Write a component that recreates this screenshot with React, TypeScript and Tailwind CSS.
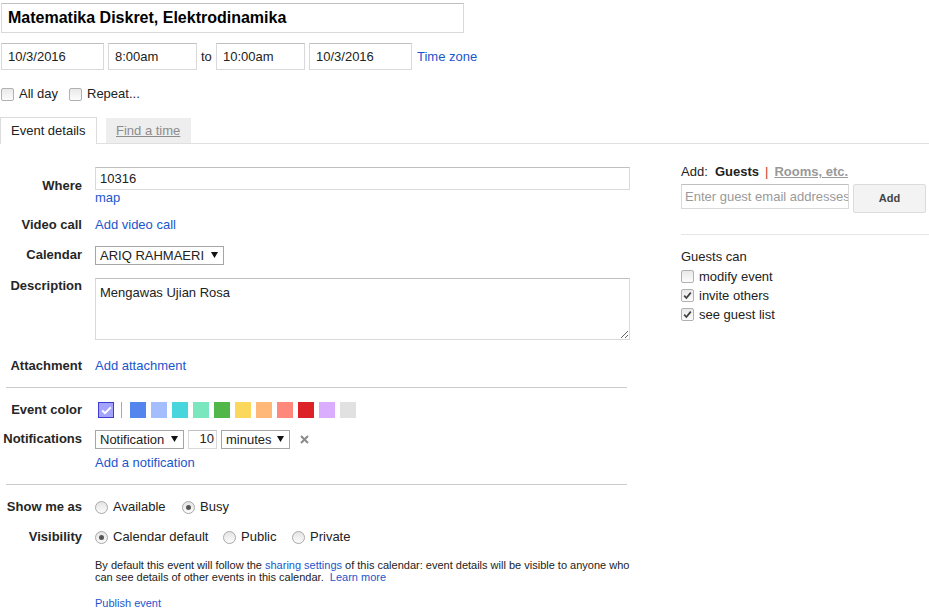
import React from "react";

const LINK = "text-[#1a56cc]";

function Check({ checked }: { checked?: boolean }) {
  return (
    <span className="inline-flex w-[13px] h-[13px] shrink-0 items-center justify-center rounded-[2px] border border-[#b1b1b1] bg-linear-to-b from-[#e9e9e9] to-[#fcfcfc]">
      {checked && (
        <svg width="9" height="9" viewBox="0 0 9 9">
          <path d="M1.2 4.6 L3.4 7 L7.8 1.6" stroke="#404040" strokeWidth="1.7" fill="none" />
        </svg>
      )}
    </span>
  );
}

function Radio({ checked }: { checked?: boolean }) {
  return (
    <span className="inline-flex w-[13px] h-[13px] shrink-0 items-center justify-center rounded-full border border-[#a8a8a8] bg-linear-to-b from-[#e4e4e4] to-[#fbfbfb]">
      {checked && <span className="w-[5px] h-[5px] rounded-full bg-[#555]" />}
    </span>
  );
}

function Arrow() {
  return (
    <svg width="7" height="6" viewBox="0 0 7 6" className="shrink-0">
      <path d="M0 0 H7 L3.5 6 Z" fill="#111" />
    </svg>
  );
}

function Select({ label, w }: { label: string; w: string }) {
  return (
    <div className={`${w} h-[19px] border border-[#a6a6a6] flex items-center justify-between pl-[4px] pr-[5px] bg-white`}>
      <span className="leading-none">{label}</span>
      <Arrow />
    </div>
  );
}

function Row({
  label,
  children,
  className = "",
  labelClass = "",
}: {
  label?: string;
  children?: React.ReactNode;
  className?: string;
  labelClass?: string;
}) {
  return (
    <div className={`flex ${className}`}>
      <div className={`w-[82px] shrink-0 text-right font-bold text-[#262626] leading-[16px] ${labelClass}`}>{label}</div>
      <div className="ml-[13px] flex-1 min-w-0">{children}</div>
    </div>
  );
}

const swatches = [
  "#5484ed",
  "#a4bdfc",
  "#46d6db",
  "#7ae7bf",
  "#51b749",
  "#fbd75b",
  "#ffb878",
  "#ff887c",
  "#dc2127",
  "#dbadff",
  "#e1e1e1",
];

const box = "border border-[#d9d9d9] border-t-[#c0c0c0] bg-white";

export default function App() {
  return (
    <div className="w-[929px] h-[616px] overflow-hidden bg-white text-[13px] text-[#222] font-['Liberation_Sans',Arial,sans-serif]">
      <div className="pt-[3px] pl-[1px]">
        <div className={`w-[463px] h-[30px] ${box} flex items-center pl-[6px] text-[16px] font-bold text-black`}>
          Matematika Diskret, Elektrodinamika
        </div>
        <div className="mt-[10px] flex items-center h-[27px]">
          <div className={`w-[103px] h-[27px] ${box} flex items-center pl-[6px]`}>10/3/2016</div>
          <div className={`ml-[4px] w-[89px] h-[27px] ${box} flex items-center pl-[6px]`}>8:00am</div>
          <span className="w-[19px] pl-[4px]">to</span>
          <div className={`w-[89px] h-[27px] ${box} flex items-center pl-[6px]`}>10:00am</div>
          <div className={`ml-[4px] w-[103px] h-[27px] ${box} flex items-center pl-[6px]`}>10/3/2016</div>
          <span className={`ml-[5px] ${LINK}`}>Time zone</span>
        </div>
        <div className="mt-[16px] flex items-center h-[16px]">
          <div className="w-[68px] flex items-center gap-[5px]">
            <Check />
            <span>All day</span>
          </div>
          <div className="flex items-center gap-[5px]">
            <Check />
            <span>Repeat...</span>
          </div>
        </div>
      </div>

      <div className="mt-[15px] flex h-[27px]">
        <div className="w-[97px] border border-b-0 border-[#dcdcdc] bg-white pl-[10px] flex items-center">Event details</div>
        <div className="w-[9px] border-b border-[#e0e0e0]" />
        <div className="w-[85px] mt-[1px] bg-[#eeeeee] border-b border-[#e0e0e0] pl-[10px] flex items-center text-[#8c8c8c] underline">
          Find a time
        </div>
        <div className="flex-1 border-b border-[#e0e0e0]" />
      </div>

      <div className="flex">
        <div className="w-[630px] pt-[23px]">
          <Row label="Where" labelClass="pt-[11px]">
            <div className={`w-[535px] h-[23px] ${box} flex items-center pl-[4px]`}>10316</div>
            <div className={`leading-[16px] ${LINK}`}>map</div>
          </Row>
          <Row label="Video call" className="mt-[4px] h-[30px] items-center">
            <span className={LINK}>Add video call</span>
          </Row>
          <Row label="Calendar" className="h-[30px] items-center">
            <Select label="ARIQ RAHMAERI" w="w-[129px]" />
          </Row>
          <Row label="Description" className="mt-[8px]" labelClass="pt-[0px]">
            <textarea
              readOnly
              defaultValue="Mengawas Ujian Rosa"
              className="block w-[535px] h-[62px] border border-[#d9d9d9] border-t-[#c0c0c0] pl-[4px] pt-[4px] text-[13px] outline-none"
            />
          </Row>
          <Row label="Attachment" className="mt-[11px] h-[30px] items-center">
            <span className={LINK}>Add attachment</span>
          </Row>
          <div className="mt-[6px] ml-[6px] w-[621px] border-t border-[#cccccc]" />
          <Row label="Event color" className="mt-[10px] h-[24px] items-center">
            <div className="flex items-center">
              <span className="ml-[3px] w-[16px] h-[16px] bg-[#a4a4ff] border-[1.5px] border-[#3c3cd0] flex items-center justify-center">
                <svg width="11" height="9" viewBox="0 0 11 9">
                  <path d="M1.2 4.6 L4 7.2 L9.8 1.4" stroke="#fff" strokeWidth="2" fill="none" />
                </svg>
              </span>
              <span className="ml-[7px] w-px h-[16px] bg-[#aaaaaa]" />
              <div className="ml-[8px] flex gap-[5px]">
                {swatches.map((c) => (
                  <span key={c} className="w-[16px] h-[16px]" style={{ backgroundColor: c }} />
                ))}
              </div>
            </div>
          </Row>
          <Row label="Notifications" className="mt-[7px] h-[20px] items-center">
            <div className="flex items-center">
              <Select label="Notification" w="w-[89px]" />
              <div className={`ml-[4px] w-[29px] h-[19px] ${box} flex items-center justify-end pr-[2px]`}>10</div>
              <div className="ml-[4px]">
                <Select label="minutes" w="w-[69px]" />
              </div>
              <svg width="9" height="9" viewBox="0 0 9 9" className="ml-[10px]">
                <path d="M1 1 L8 8 M8 1 L1 8" stroke="#8a8a8a" strokeWidth="2" />
              </svg>
            </div>
          </Row>
          <Row className="mt-[6px] h-[16px] items-center">
            <span className={LINK}>Add a notification</span>
          </Row>
          <div className="mt-[13px] ml-[6px] w-[621px] border-t border-[#cccccc]" />
          <Row label="Show me as" className="mt-[10px] h-[24px] items-center">
            <div className="flex items-center">
              <div className="w-[87px] flex items-center gap-[5px]">
                <Radio />
                <span>Available</span>
              </div>
              <div className="flex items-center gap-[5px]">
                <Radio checked />
                <span>Busy</span>
              </div>
            </div>
          </Row>
          <Row label="Visibility" className="mt-[6px] h-[24px] items-center">
            <div className="flex items-center">
              <div className="w-[128px] flex items-center gap-[5px]">
                <Radio checked />
                <span>Calendar default</span>
              </div>
              <div className="w-[69px] flex items-center gap-[5px]">
                <Radio />
                <span>Public</span>
              </div>
              <div className="flex items-center gap-[5px]">
                <Radio />
                <span>Private</span>
              </div>
            </div>
          </Row>
          <Row className="mt-[10px]">
            <div className="text-[11px] leading-[12px] whitespace-nowrap">
              By default this event will follow the <span className={LINK}>sharing settings</span> of this calendar: event details will be visible to anyone who
              <br />
              can see details of other events in this calendar.&nbsp; <span className={LINK}>Learn more</span>
            </div>
          </Row>
          <Row className="mt-[14px]">
            <div className={`text-[11px] leading-[12px] ${LINK}`}>Publish event</div>
          </Row>
        </div>

        <div className="ml-[51px] flex-1 pt-[20px]">
          <div className="leading-[16px] flex items-center whitespace-pre">
            <span>Add:  </span>
            <span className="font-bold">Guests</span>
            <span className="text-[#c0392b] mx-[6px]">|</span>
            <span className="font-bold text-[#999] underline">Rooms, etc.</span>
          </div>
          <div className="mt-[4px] flex items-start">
            <input
              readOnly
              placeholder="Enter guest email addresses"
              className="w-[168px] h-[25px] border border-[#d9d9d9] border-t-[#c0c0c0] pl-[3px] text-[13px] placeholder:text-[#9a9a9a] outline-none"
            />
            <div className="ml-[4px] w-[73px] h-[29px] rounded-[2px] border border-[#dcdcdc] bg-[#f3f3f3] flex items-center justify-center text-[11px] font-bold text-[#444]">
              Add
            </div>
          </div>
          <div className="mt-[21px] border-t border-[#e5e5e5]" />
          <div className="mt-[14px] leading-[16px]">Guests can</div>
          <div className="mt-[2px]">
            {[
              ["modify event", false],
              ["invite others", true],
              ["see guest list", true],
            ].map(([t, c]) => (
              <div key={t as string} className="h-[19px] flex items-center gap-[5px]">
                <Check checked={c as boolean} />
                <span>{t as string}</span>
              </div>
            ))}
          </div>
        </div>
      </div>
    </div>
  );
}
